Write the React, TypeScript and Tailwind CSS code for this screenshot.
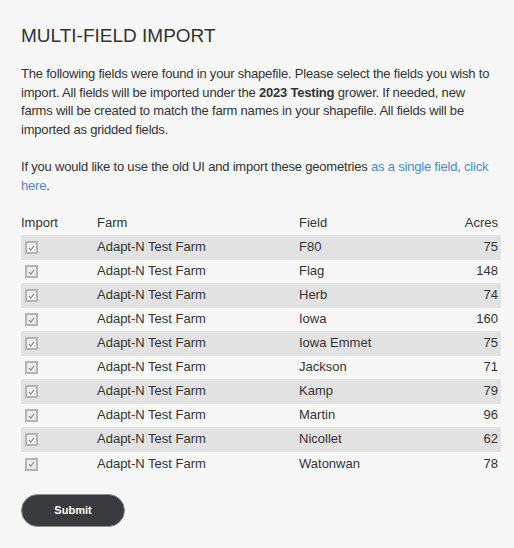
import React from 'react';

type Row = { farm: string; field: string; acres: number };

const rows: Row[] = [
  { farm: 'Adapt-N Test Farm', field: 'F80', acres: 75 },
  { farm: 'Adapt-N Test Farm', field: 'Flag', acres: 148 },
  { farm: 'Adapt-N Test Farm', field: 'Herb', acres: 74 },
  { farm: 'Adapt-N Test Farm', field: 'Iowa', acres: 160 },
  { farm: 'Adapt-N Test Farm', field: 'Iowa Emmet', acres: 75 },
  { farm: 'Adapt-N Test Farm', field: 'Jackson', acres: 71 },
  { farm: 'Adapt-N Test Farm', field: 'Kamp', acres: 79 },
  { farm: 'Adapt-N Test Farm', field: 'Martin', acres: 96 },
  { farm: 'Adapt-N Test Farm', field: 'Nicollet', acres: 62 },
  { farm: 'Adapt-N Test Farm', field: 'Watonwan', acres: 78 },
];

const CheckBox: React.FC = () => (
  <span className="ml-[4px] inline-flex h-[13px] w-[13px] items-center justify-center border-2 border-[#b4b4b4] bg-[#ececec]">
    <svg width="7" height="6" viewBox="0 0 7 6">
      <path d="M1 3.2 L2.8 5 L6 1" fill="none" stroke="#8a8a8a" strokeWidth="1.2" />
    </svg>
  </span>
);

const App: React.FC = () => {
  return (
    <div className="min-h-[548px] bg-[#f7f7f7] pl-[21px] pr-[13px] pt-[24px] font-['Liberation_Sans',Arial,sans-serif] text-[#333333]">
      <h1 className="text-[19px] leading-[24px]">MULTI-FIELD IMPORT</h1>

      <p className="mt-[17px] text-[13px] leading-[18.6px] tracking-[-0.2px]">
        The following fields were found in your shapefile. Please select the fields you wish to
        import. All fields will be imported under the <b className="font-bold">2023 Testing</b> grower. If needed, new
        <br />
        farms will be created to match the farm names in your shapefile. All fields will be
        <br />
        imported as gridded fields.
      </p>

      <p className="mt-[18.6px] text-[13px] leading-[18.6px] tracking-[-0.2px]">
        If you would like to use the old UI and import these geometries{' '}
        <a className="text-[#4a8ad0]">as a single field, click here</a>.
      </p>

      <table className="mt-[16px] w-[480px] border-collapse text-[13px]">
        <thead>
          <tr className="h-[24px]">
            <th className="w-[76px] p-0 text-left font-normal">Import</th>
            <th className="w-[202px] p-0 text-left font-normal">Farm</th>
            <th className="p-0 text-left font-normal">Field</th>
            <th className="pr-[3px] text-right font-normal">Acres</th>
          </tr>
        </thead>
        <tbody>
          {rows.map((r, i) => (
            <tr
              key={r.field}
              className={`h-[24px] border-t border-[#e3e3e3] ${i % 2 === 0 ? 'bg-[#e2e2e2]' : 'bg-[#f7f7f7]'}`}
            >
              <td className="p-0 align-middle leading-none">
                <CheckBox />
              </td>
              <td className="p-0">{r.farm}</td>
              <td className="p-0">{r.field}</td>
              <td className="pr-[3px] text-right">{r.acres}</td>
            </tr>
          ))}
        </tbody>
      </table>

      <button className="mt-[19px] block h-[33px] w-[104px] rounded-full border border-[#8f8f93] bg-[#3a3b3f] text-[11px] font-bold text-white">
        Submit
      </button>
    </div>
  );
};

export default App;
